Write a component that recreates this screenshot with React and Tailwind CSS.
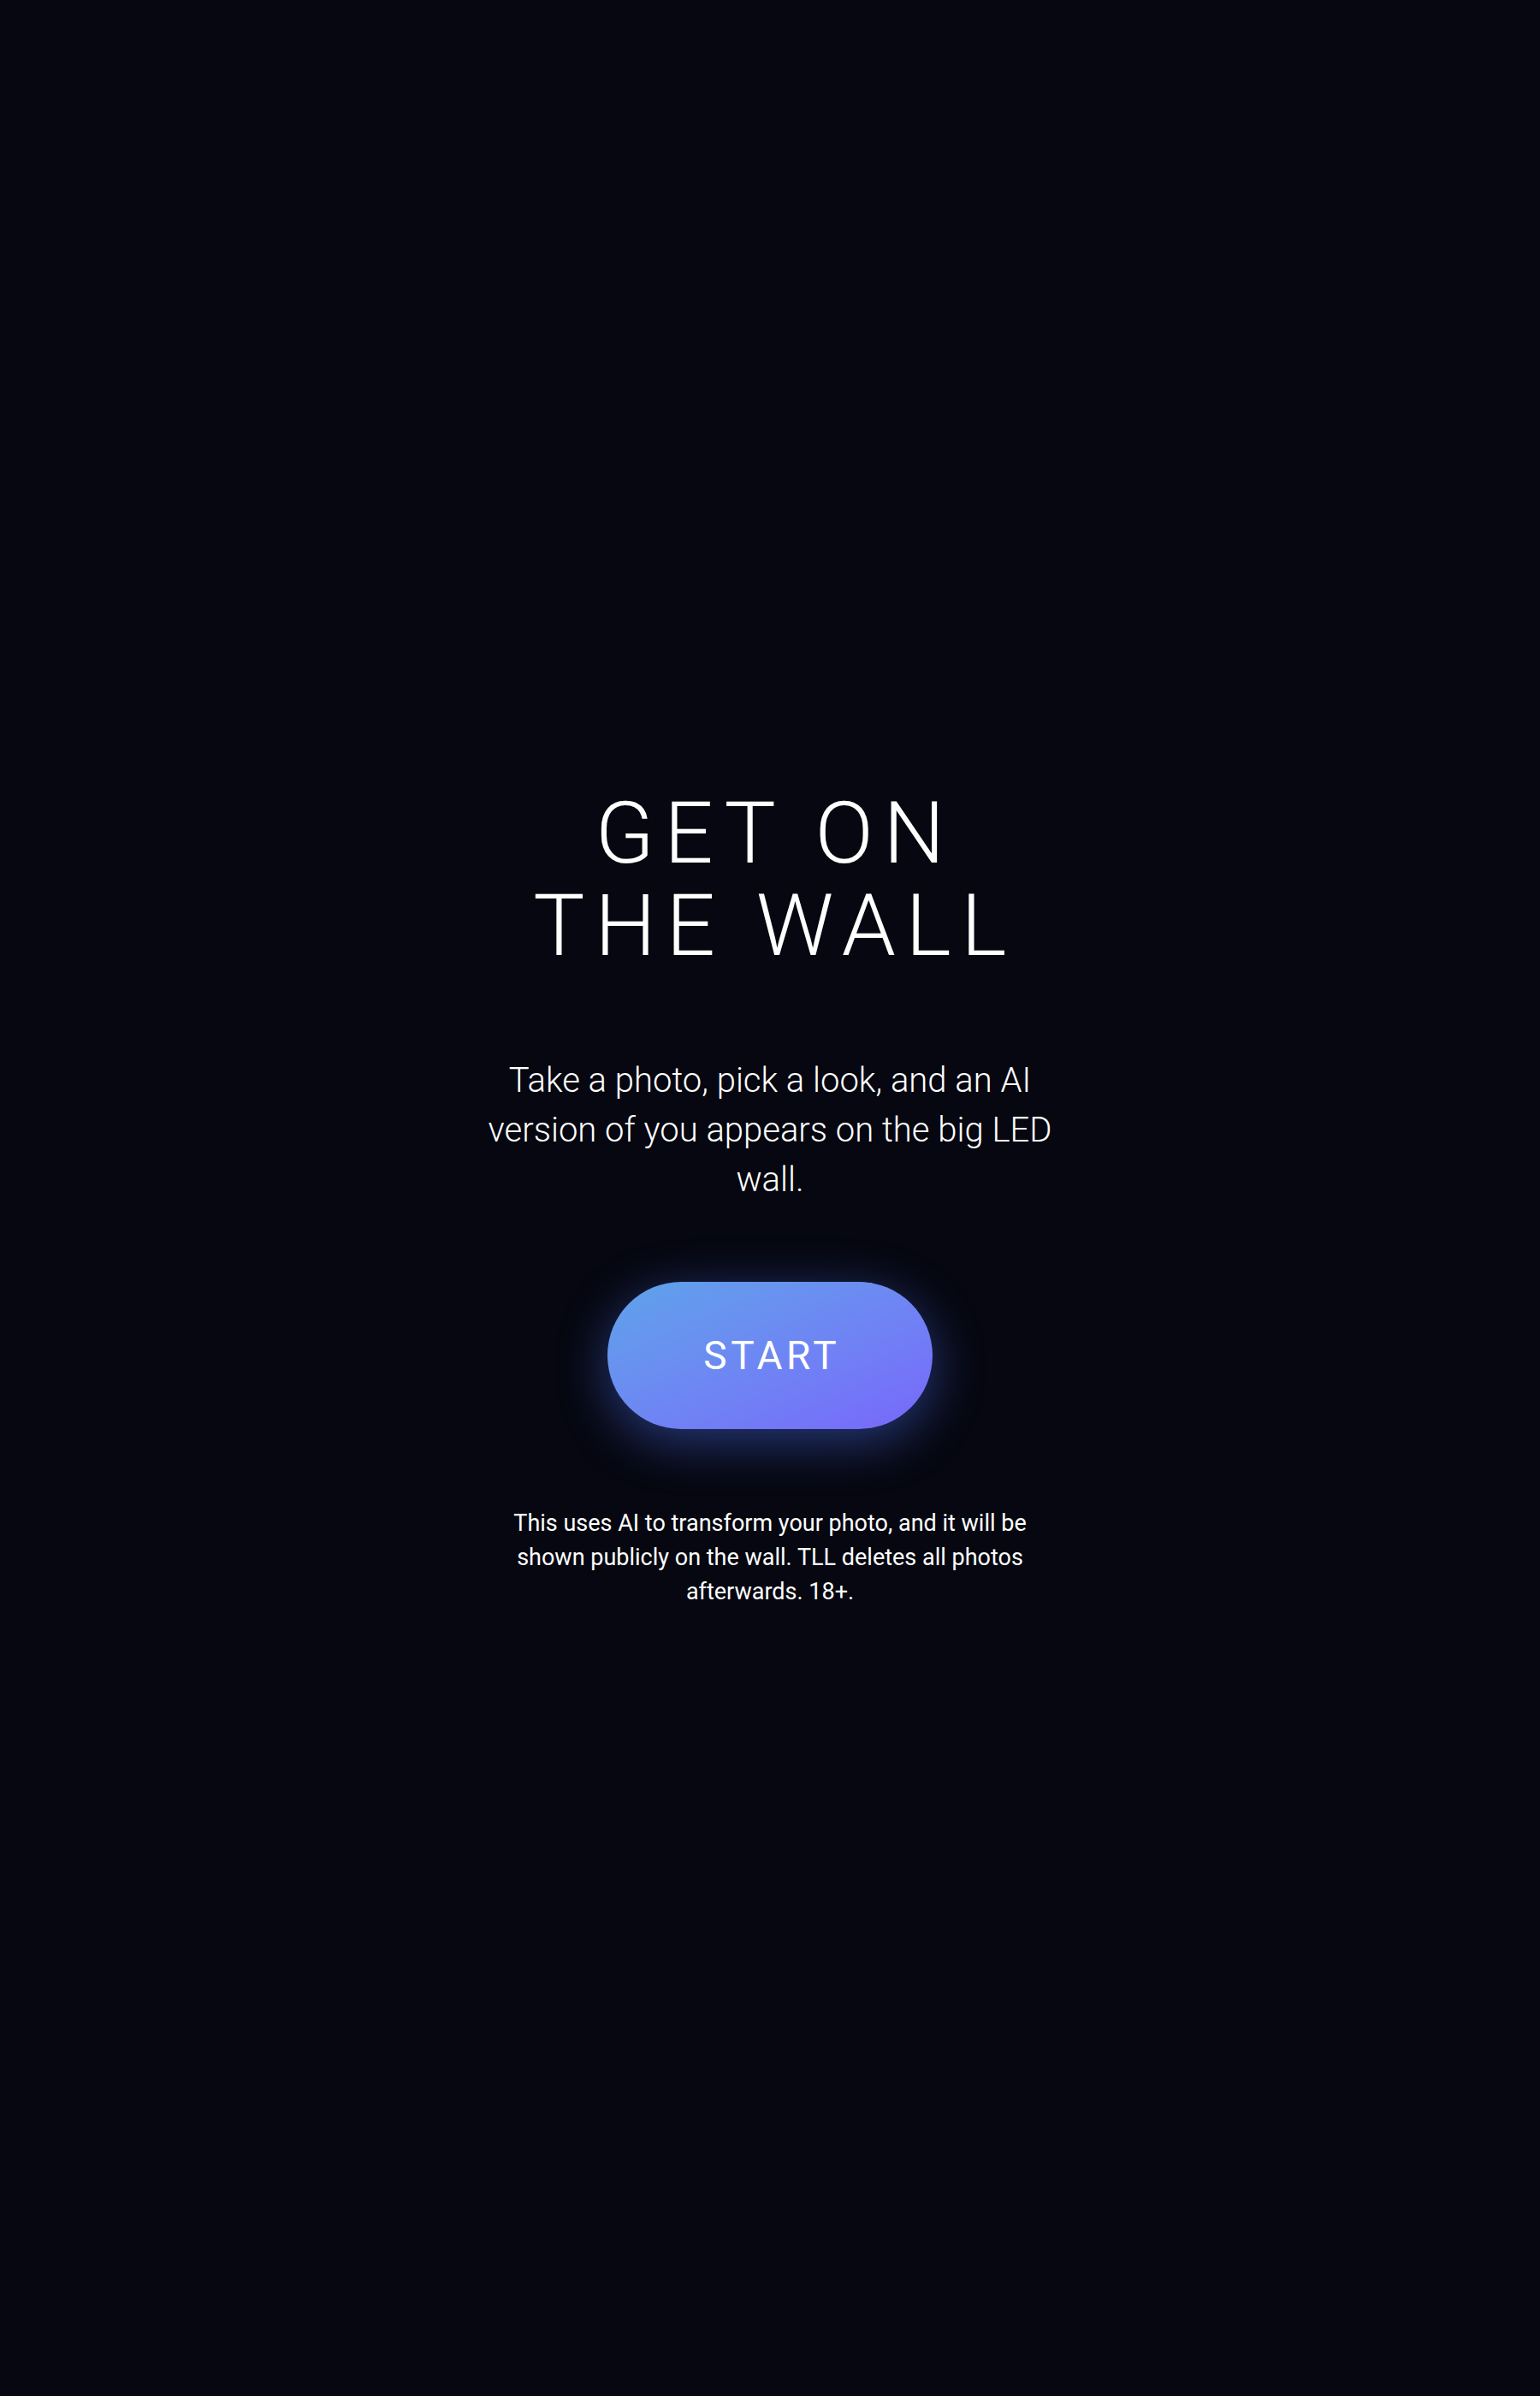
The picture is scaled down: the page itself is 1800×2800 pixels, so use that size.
import React from "react";

export default function App() {
  return (
    <main className="min-h-screen w-full bg-[#060710] flex items-center justify-center text-white font-['Roboto','Liberation_Sans',sans-serif]">
      <div className="flex flex-col items-center text-center">
        <h1 className="text-[101px] leading-[108px] font-light tracking-[0.115em] pl-[0.115em]">
          GET ON
          <br />
          THE WALL
        </h1>

        <p className="mt-[98px] w-[680px] text-[40px] leading-[58px] font-light">
          Take a photo, pick a look, and an AI version of you appears on the big LED wall.
        </p>

        <button className="mt-[90px] w-[380px] h-[172px] rounded-full bg-gradient-to-br from-[#5ea3ea] to-[#7866fb] shadow-[0_14px_60px_rgba(80,120,255,0.45)] text-[46px] tracking-[0.1em] pl-[0.1em] font-normal">
          START
        </button>

        <p className="mt-[90px] w-[620px] text-[27px] leading-[40px] font-normal">
          This uses AI to transform your photo, and it will be shown publicly on the wall. TLL deletes all photos afterwards. 18+.
        </p>
      </div>
    </main>
  );
}
